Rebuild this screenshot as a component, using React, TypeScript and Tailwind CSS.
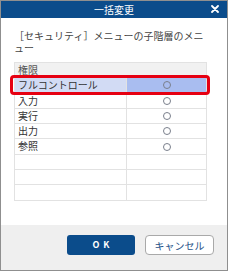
import React from "react";

const rows = [
  { name: "フルコントロール", mark: true, selected: true },
  { name: "入力", mark: true },
  { name: "実行", mark: true },
  { name: "出力", mark: true },
  { name: "参照", mark: true },
  { name: "", mark: false },
  { name: "", mark: false },
  { name: "", mark: false },
];

function Circle() {
  return <div className="w-[8px] h-[8px] rounded-full border border-[#7a7f8c]" />;
}

export default function App() {
  return (
    <div
      className="w-[228px] h-[271px] border border-[#8f8f8f] bg-white flex flex-col text-[#333] overflow-hidden"
      style={{ fontFamily: '"Noto Sans CJK JP", "Noto Sans", sans-serif' }}
    >
      {/* title bar */}
      <div className="relative h-[17px] shrink-0 bg-[#0b4c8b] text-white text-[10px] leading-[17px] text-center">
        一括変更
        <span className="absolute right-[8px] top-[4px]">
          <svg width="8" height="8" viewBox="0 0 8 8">
            <path d="M1 1 L7 7 M7 1 L1 7" stroke="#fff" strokeWidth="1.8" strokeLinecap="round" />
          </svg>
        </span>
      </div>

      {/* body */}
      <div className="flex-1 px-[13px]">
        <p className="mt-[12px] w-[195px] text-[10px] leading-[12px] text-[#444]">
          ［セキュリティ］メニューの子階層のメニュー
        </p>
        <div className="relative mt-[8px] w-[193px] border-t border-l border-r border-[#e2e2e2] text-[10px]">
          <div className="flex h-[15.3px] border-b border-[#e2e2e2] bg-[#f1f1f1]">
            <div className="w-[112px] pl-[3px] leading-[14px] text-[#555]">権限</div>
            <div className="flex-1" />
          </div>
          {rows.map((r, i) => (
            <div key={i} className="flex h-[15.3px] border-b border-[#e2e2e2]">
              <div
                className={`w-[112px] pl-[3px] leading-[14px] border-r border-[#e2e2e2] ${
                  r.selected ? "bg-[#d2dbf4]" : ""
                }`}
              >
                {r.name}
              </div>
              <div className={`flex-1 flex items-center justify-center ${r.selected ? "bg-[#a9bdf0]" : ""}`}>
                {r.mark && <Circle />}
              </div>
            </div>
          ))}
          <div className="absolute left-[-5px] top-[12px] w-[200px] h-[20px] border-[3px] border-[#e60012] rounded-[4px]" />
        </div>
      </div>

      {/* footer */}
      <div className="h-[45px] shrink-0 bg-[#efefef] flex justify-end items-start gap-[10px] pt-[10px] pr-[13px]">
        <button className="w-[68px] h-[20px] rounded-[3px] bg-[#0b4c8b] text-white text-[9px] font-bold tracking-[4px] pl-[4px]">
          OK
        </button>
        <button className="w-[69px] h-[20px] rounded-[4px] bg-white border border-[#a9a9a9] text-[#1d4f87] text-[10px]">
          キャンセル
        </button>
      </div>
    </div>
  );
}
